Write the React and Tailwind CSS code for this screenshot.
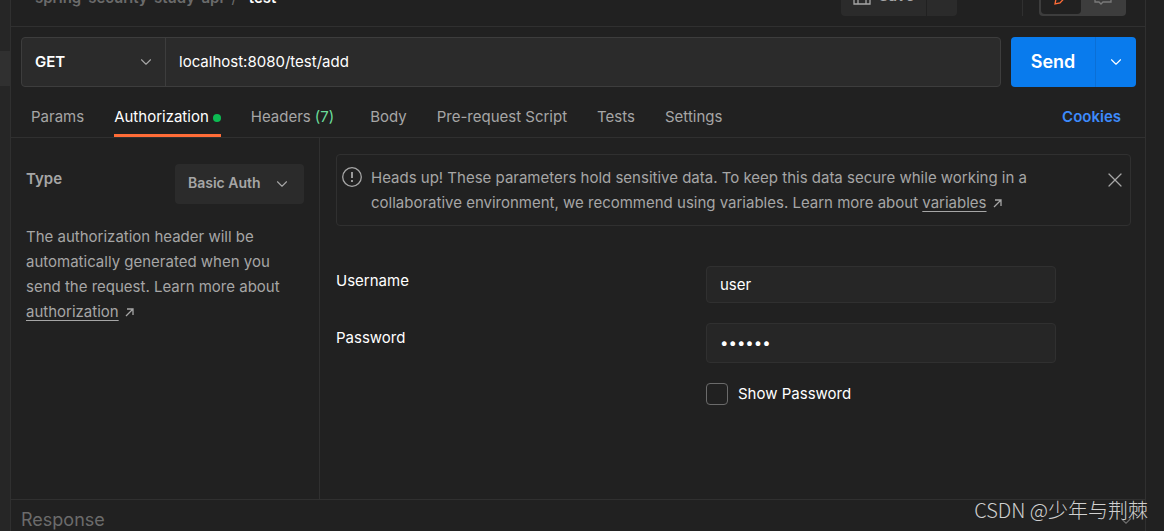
import React, { useState } from "react";
import { ChevronDown, X } from "lucide-react";

const tabs = [
  { name: "Params" },
  { name: "Authorization", active: true },
  { name: "Headers", count: 7 },
  { name: "Body" },
  { name: "Pre-request Script" },
  { name: "Tests" },
  { name: "Settings" },
];

function ArrowUpRight() {
  return (
    <svg
      className="inline-block ml-1.5 align-baseline"
      width="9"
      height="9"
      viewBox="0 0 9 9"
      fill="none"
      stroke="currentColor"
      strokeWidth="1.3"
    >
      <path d="M2 1H8V7M8 1L1 8" />
    </svg>
  );
}

function TopBar() {
  return (
    <header className="flex h-[27px] items-end justify-between overflow-hidden border-b border-[#303030] pb-2.5 pr-[19px] pl-6">
      <h1 className="flex gap-2 pb-2 text-[15px] leading-5 font-semibold text-[#6b6b6b]">
        <span>spring-security-study-api</span>
        <span className="font-normal">/</span>
        <span className="pl-1 text-white">test</span>
      </h1>
      <div className="flex items-end">
        <button className="flex h-10 w-[85px] items-center justify-center gap-2 rounded-l bg-[#2b2b2b] text-[15px] font-semibold text-[#a6a6a6]">
          <svg width="18" height="18" viewBox="0 0 18 18" fill="none" stroke="currentColor" strokeWidth="1.3">
            <path d="M1 1H14L17 4V17H1ZM5 17V10H13V17M5 1V5H11V1" />
          </svg>
          Save
        </button>
        <button aria-label="More save options" className="ml-px h-10 w-[30px] rounded-r bg-[#2b2b2b]" />
        <div className="ml-[65px] h-10 w-px bg-[#303030]" />
        <div className="ml-4 flex h-10 w-[87px] rounded bg-[#3d3d3d] p-0.5">
          <button aria-label="Build" className="flex w-10 items-center justify-center rounded bg-[#212121] text-[#ff6c37]">
            <svg width="18" height="18" viewBox="0 0 18 18" fill="none" stroke="currentColor" strokeWidth="1.3">
              <path d="M3 17L4 12L13 2L17 6L8 16L3 17Z" />
            </svg>
          </button>
          <button aria-label="Comments" className="flex flex-1 items-center justify-center text-[#7a7a7a]">
            <svg width="18" height="18" viewBox="0 0 18 18" fill="none" stroke="currentColor" strokeWidth="1.3">
              <path d="M1 1H17V15H9L7 17L5 15H1Z" />
            </svg>
          </button>
        </div>
      </div>
    </header>
  );
}

function RequestBar() {
  return (
    <div className="flex gap-2.5 pt-2.5 pr-[9px] pl-2.5">
      <div className="flex h-[50px] flex-1 rounded border border-[#3d3d3d] bg-[#2b2b2b]">
        <div className="relative w-36 border-r border-[#3d3d3d]">
          <select
            aria-label="Method"
            className="h-full w-full appearance-none pl-[13px] text-[15px] font-semibold text-white outline-none"
          >
            <option>GET</option>
            <option>POST</option>
          </select>
          <ChevronDown
            size={18}
            strokeWidth={1.5}
            className="pointer-events-none absolute top-[15px] right-2.5 text-[#a6a6a6]"
          />
        </div>
        <input
          aria-label="Request URL"
          className="min-w-0 flex-1 px-[13px] text-[15px] text-white outline-none"
          defaultValue="localhost:8080/test/add"
        />
      </div>
      <div className="flex h-[50px] rounded bg-[#097bed] text-white">
        <button className="w-21 text-lg font-semibold">Send</button>
        <button
          aria-label="Send options"
          className="flex w-[41px] items-center justify-center border-l border-[#0a6fd6]"
        >
          <ChevronDown size={18} strokeWidth={1.5} />
        </button>
      </div>
    </div>
  );
}

function Tabs() {
  return (
    <nav className="flex h-[51px] justify-between border-b border-[#303030] pr-6 pl-5">
      <div className="flex gap-[30px]">
        {tabs.map((tab) => (
          <button
            key={tab.name}
            className={
              tab.active
                ? "flex items-center gap-1 border-b-3 border-[#ff6c37] pt-3.5 text-[15px] text-white"
                : "flex items-center gap-1 pt-3.5 pb-[3px] text-[15px] text-[#a6a6a6]"
            }
          >
            {tab.name}
            {tab.active && <span className="size-2 rounded-full bg-[#0cbb52]" />}
            {tab.count && <span className="pr-1.5 text-[#6bdd9a]">({tab.count})</span>}
          </button>
        ))}
      </div>
      <a href="#cookies" className="self-center pt-2.5 text-[15px] font-semibold text-[#3d8bfd]">
        Cookies
      </a>
    </nav>
  );
}

function TypePanel() {
  return (
    <aside className="w-[309px] shrink-0 border-r border-[#303030] pt-[26px] pr-[15px] pl-[15px] text-[15px] text-[#a6a6a6]">
      <div className="flex items-start justify-between">
        <label htmlFor="auth-type" className="pt-[3px] leading-6 font-semibold">
          Type
        </label>
        <div className="relative w-[129px]">
          <select
            id="auth-type"
            className="h-10 w-full appearance-none rounded bg-[#2b2b2b] pb-0.5 pl-[13px] text-sm font-semibold outline-none"
          >
            <option>Basic Auth</option>
            <option>Bearer Token</option>
          </select>
          <ChevronDown
            size={18}
            strokeWidth={1.5}
            className="pointer-events-none absolute top-[11px] right-[13px]"
          />
        </div>
      </div>
      <p className="mt-5 leading-[25px]">
        The authorization header will be automatically generated when you send the request. Learn more about{" "}
        <a href="#authorization" className="underline underline-offset-3">
          authorization
        </a>
        <ArrowUpRight />
      </p>
    </aside>
  );
}

function Notice({ onClose }) {
  return (
    <div className="flex items-start rounded border border-[#303030] py-2.5 pr-[3px] pl-[5px] text-[15px] text-[#a6a6a6]">
      <svg className="mt-0.5 shrink-0" width="20" height="20" viewBox="0 0 20 20" fill="none" stroke="currentColor">
        <circle cx="10" cy="10" r="9.3" strokeWidth="1.3" />
        <path d="M10 5V11M10 13V15" strokeWidth="1.8" />
      </svg>
      <p className="ml-[9px] max-w-[670px] leading-[25px]">
        Heads up! These parameters hold sensitive data. To keep this data secure while working in a collaborative
        environment, we recommend using variables. Learn more about{" "}
        <a href="#variables" className="underline underline-offset-3">
          variables
        </a>
        <ArrowUpRight />
      </p>
      <button aria-label="Close" className="mt-[3px] ml-auto" onClick={onClose}>
        <X size={24} strokeWidth={1.2} />
      </button>
    </div>
  );
}

function BasicAuthForm() {
  const [showPassword, setShowPassword] = useState(false);

  return (
    <form className="mt-10 mr-[75px] grid grid-cols-[1fr_350px] text-[15px] text-white">
      <label htmlFor="username" className="pt-1 leading-[22px]">
        Username
      </label>
      <input
        id="username"
        className="h-[37px] rounded border border-[#303030] bg-[#262626] px-[13px] outline-none"
        defaultValue="user"
      />
      <label htmlFor="password" className="mt-5 pt-1 leading-[22px]">
        Password
      </label>
      <input
        id="password"
        type={showPassword ? "text" : "password"}
        className="mt-5 h-10 rounded border border-[#303030] bg-[#262626] px-[13px] pb-0.5 outline-none"
        defaultValue="123456"
      />
      <label className="col-start-2 mt-5 flex items-center gap-2.5 leading-[22px]">
        <input
          type="checkbox"
          className="size-[22px] appearance-none rounded border border-[#6b6b6b] checked:bg-[#ff6c37]"
          checked={showPassword}
          onChange={(e) => setShowPassword(e.target.checked)}
        />
        Show Password
      </label>
    </form>
  );
}

export default function App() {
  const [notice, setNotice] = useState(true);

  return (
    <div className="relative flex h-screen overflow-hidden bg-[#212121] font-['Inter',sans-serif]">
      <div className="w-[11px] shrink-0 border-r border-[#303030] bg-[#262626] pt-[51px]">
        <div className="h-[35px] bg-[#303030]" />
      </div>
      <main className="flex min-w-0 flex-1 flex-col">
        <TopBar />
        <RequestBar />
        <Tabs />
        <section className="flex min-h-0 flex-1">
          <TypePanel />
          <div className="min-w-0 flex-1 pt-4 pr-3.5 pl-4">
            {notice && <Notice onClose={() => setNotice(false)} />}
            <BasicAuthForm />
          </div>
        </section>
        <footer className="flex h-8 items-start justify-between overflow-hidden border-t border-[#303030] px-2.5 pt-2 text-[#6b6b6b]">
          <h2 className="text-lg leading-6">Response</h2>
          <ChevronDown size={18} strokeWidth={1.5} className="mt-1" />
        </footer>
      </main>
      <div className="w-[19px] shrink-0 border-l border-[#303030]" />
      <div className="absolute right-4 bottom-1.5 font-['Noto_Sans_CJK_SC',sans-serif] text-[20px] leading-[30px] font-light text-[#d0d0d0]">
        CSDN @少年与荆棘
      </div>
    </div>
  );
}
